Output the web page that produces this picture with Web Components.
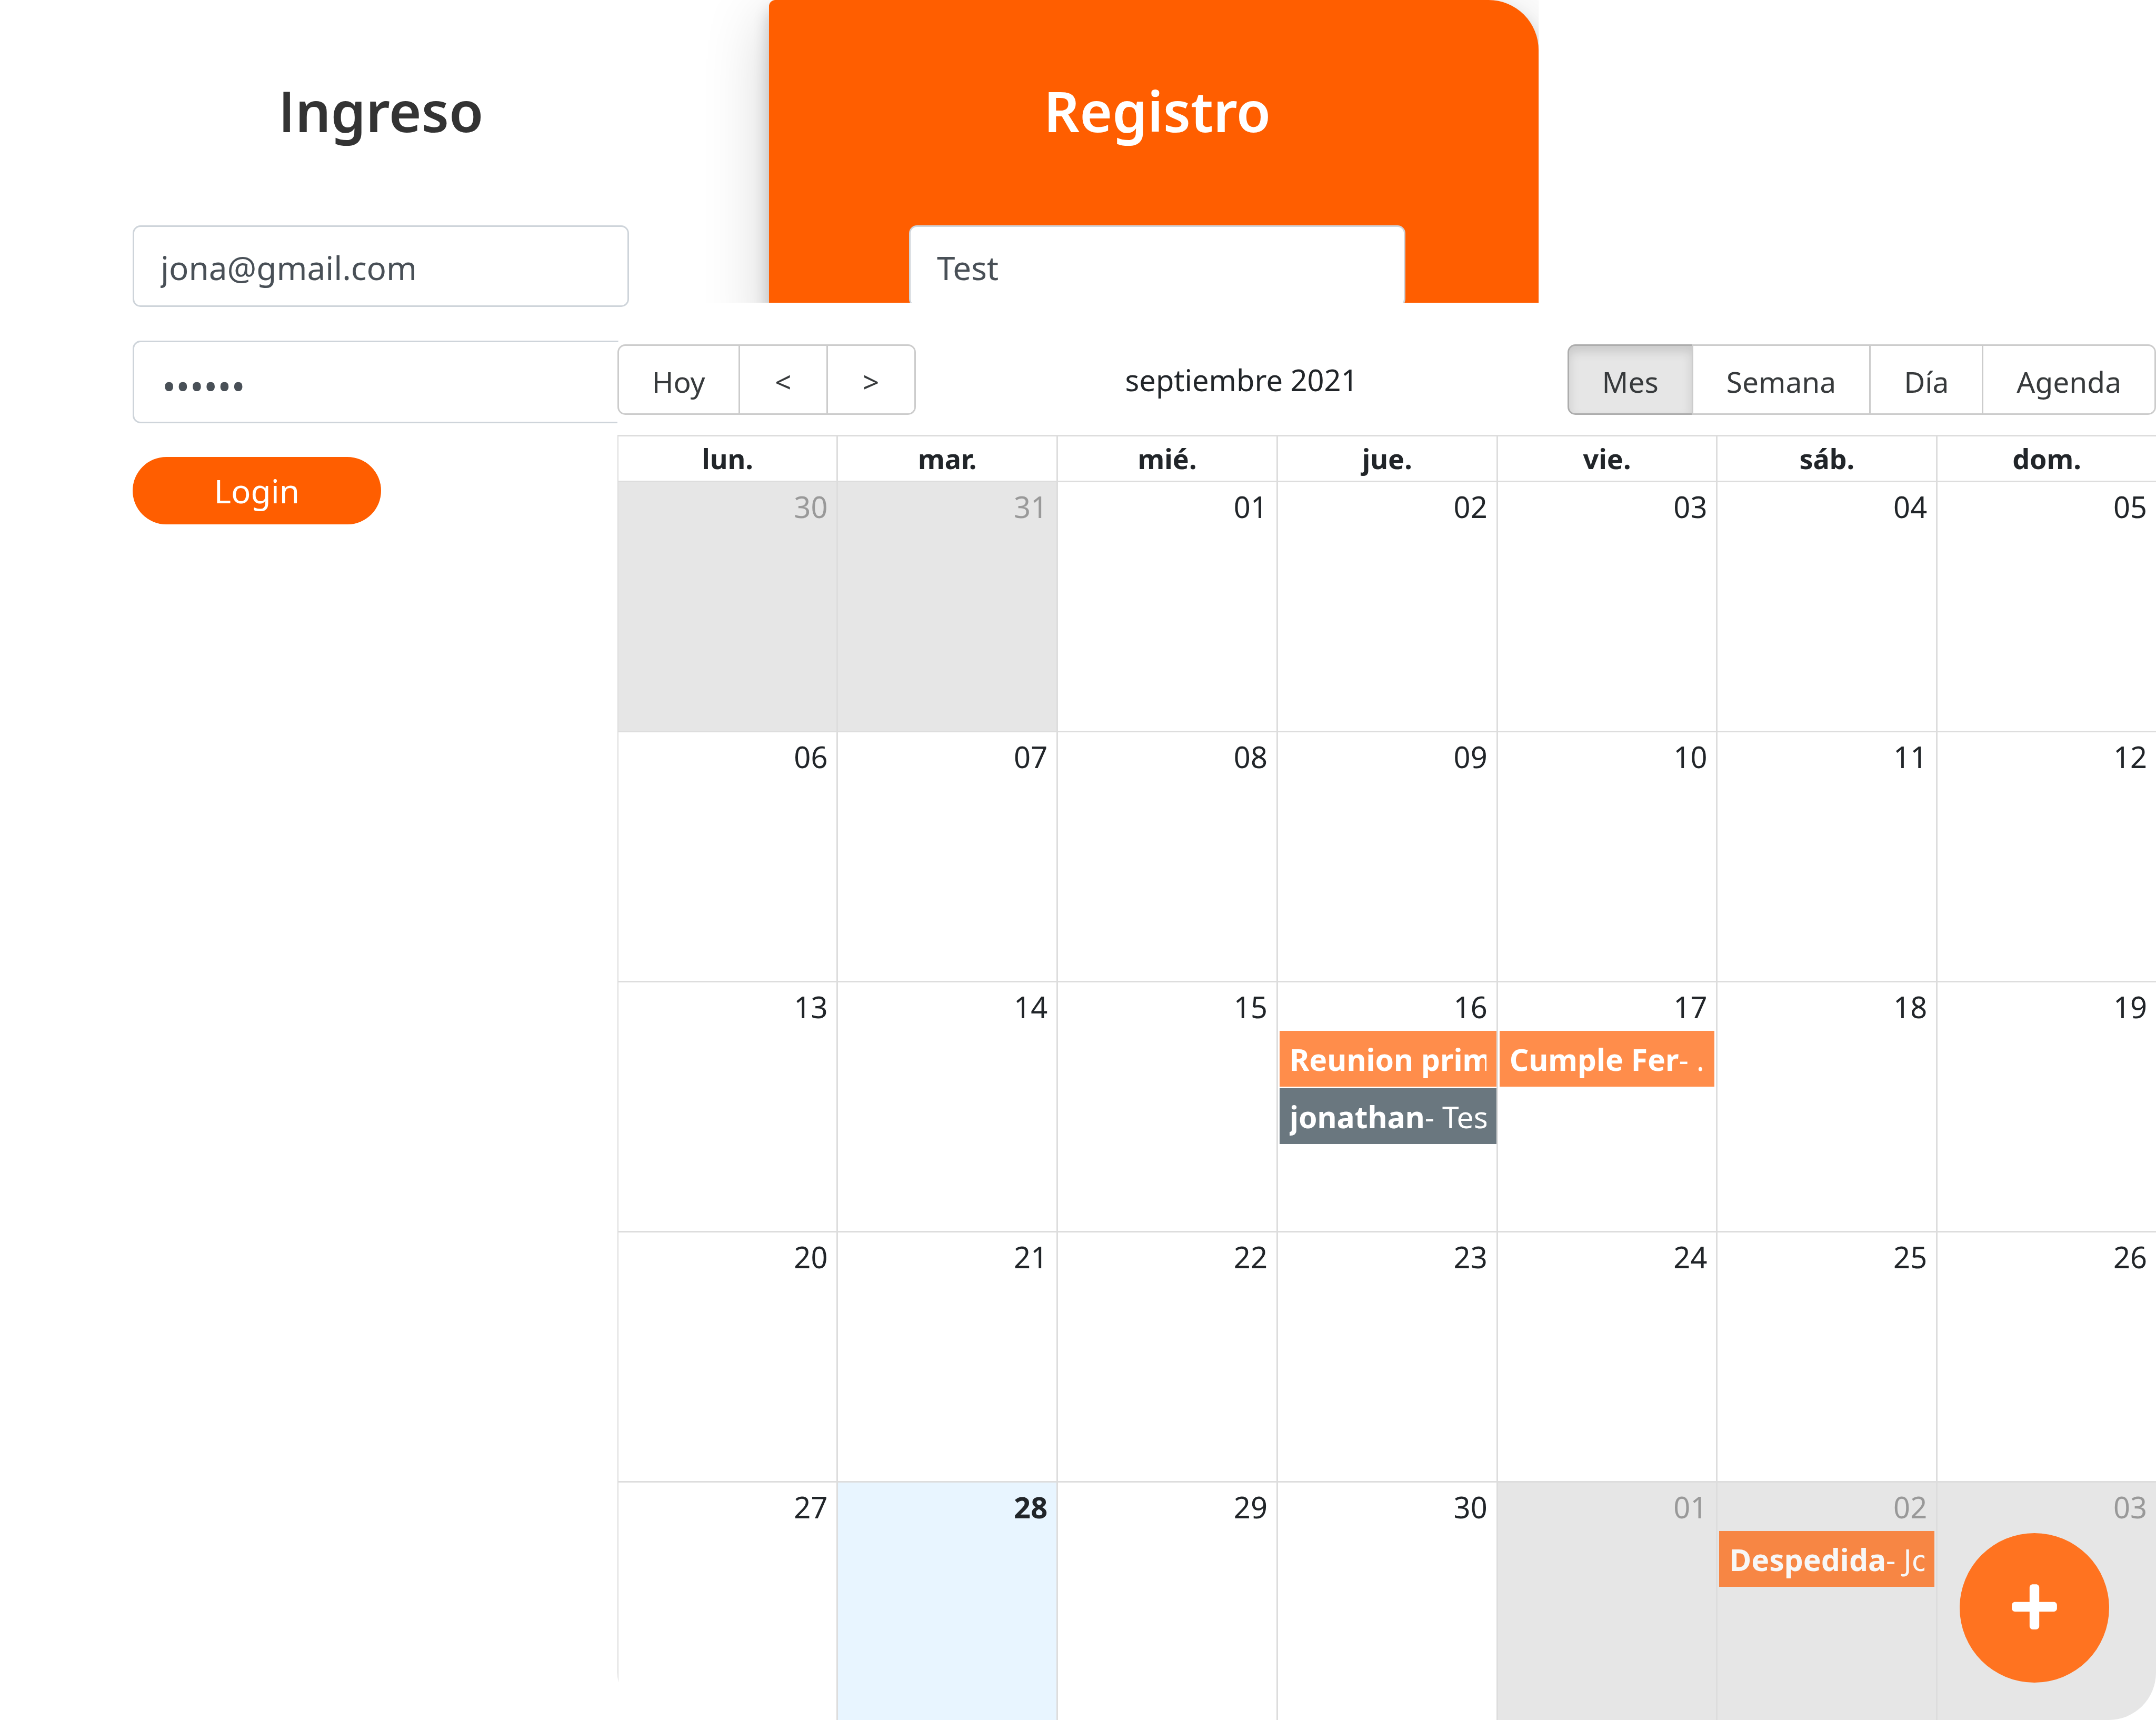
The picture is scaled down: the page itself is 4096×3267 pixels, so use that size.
<!DOCTYPE html>
<html lang="es">
<head>
<meta charset="utf-8">
<title>Calendario</title>
<style>
  html, body { margin: 0; background: #fff; }
  body {
    font-family: "Noto Sans", "Open Sans", sans-serif;
    font-size: 56px;
    color: #212529;
  }
</style>
</head>
<body>
<app-shell>
  <auth-panel heading="Ingreso">
    <text-field label="Correo" type="email" value="jona@gmail.com"></text-field>
    <text-field label="Contraseña" type="password" value="123456"></text-field>
    <pill-button>Login</pill-button>
  </auth-panel>
  <auth-panel heading="Registro" accent>
    <text-field label="Nombre" type="text" value="Test"></text-field>
  </auth-panel>
  <calendar-card slot="front">
    <calendar-toolbar slot="toolbar">septiembre 2021</calendar-toolbar>
    <month-view></month-view>
    <add-button slot="action"></add-button>
  </calendar-card>
</app-shell>

<script>
const define = (name, html, setup) => {
  const tpl = document.createElement('template');
  tpl.innerHTML = html;
  customElements.define(name, class extends HTMLElement {
    connectedCallback() {
      if (this.shadowRoot) return;
      this.attachShadow({ mode: 'open' }).append(tpl.content.cloneNode(true));
      if (setup) setup(this, this.shadowRoot);
    }
  });
};

/* Two layers in one grid cell: the sign-in panels behind, the calendar in front */
define('app-shell', `
  <style>
    :host { display: grid; grid-template: 1fr / 1fr; min-height: 100vh; overflow: hidden; }
    .back, ::slotted([slot=front]) { grid-area: 1 / 1; }
    .back { display: grid; grid-template-columns: 35.67% 35.7%; align-items: start; }
    ::slotted([slot=front]) { margin: 575px 0 0 28.63%; }
  </style>
  <main class="back"><slot></slot></main>
  <slot name="front"></slot>`);

/* The accent panel casts its shadow over the panel on its left only */
define('auth-panel', `
  <style>
    :host { display: block; box-sizing: border-box; padding: 145px 266px 60px 252px; color: #333; }
    :host([accent]) {
      padding: 145px 253px 60px 266px; background: #ff5e00; color: #fff;
      border-radius: 12px 95px 0 0;
      box-shadow: 0 19px 30px rgba(0,0,0,.2), 0 34px 124px rgba(0,0,0,.19);
      clip-path: inset(0 0 0 -200px);
    }
    h2 { margin: 0 0 153px; font-size: 106px; line-height: 130px; font-weight: 600; text-align: center; }
    :host(:not([accent])) h2::first-letter { font-family: "Open Sans"; }
    .fields { display: flex; flex-direction: column; gap: 64px; }
  </style>
  <h2></h2>
  <div class="fields"><slot></slot></div>`,
  (el, root) => { root.querySelector('h2').textContent = el.getAttribute('heading'); });

define('text-field', `
  <style>
    :host { display: block; }
    input {
      display: block; box-sizing: border-box; width: 100%; height: 155px; margin: 0;
      padding: 5px 50px 0; border: 3px solid #ced4da; border-radius: 15px; background: #fff;
      font: 62px/90px "Noto Sans", sans-serif; color: #495057; outline: 0;
    }
    input[type=password] { height: 157px; padding: 14px 53px 0; font-size: 70px; }
  </style>
  <input>`,
  (el, root) => {
    const input = root.querySelector('input');
    input.type = el.getAttribute('type');
    input.value = el.getAttribute('value');
    input.setAttribute('aria-label', el.getAttribute('label'));
  });

define('pill-button', `
  <style>
    :host { display: block; }
    button {
      display: block; width: 50%; height: 128px; margin: 0; padding: 0; border: 0; border-radius: 64px;
      background: #ff5e00; color: #fff; font: 62px/90px "Noto Sans", sans-serif;
    }
  </style>
  <button type="button"><slot></slot></button>`);

define('calendar-card', `
  <style>
    :host {
      display: flex; flex-direction: column; position: relative; box-sizing: border-box;
      padding-top: 79px; background: #fff; border-radius: 90px; overflow: hidden;
    }
    ::slotted([slot=action]) { position: absolute; right: 89px; bottom: 71px; }
  </style>
  <slot name="toolbar"></slot>
  <slot></slot>
  <slot name="action"></slot>`);

define('calendar-toolbar', `
  <style>
    :host { display: flex; align-items: center; margin-bottom: 38px; }
    .group { display: flex; }
    .label { flex: 1; text-align: center; line-height: 84px; }
    button {
      box-sizing: border-box; height: 134px; min-width: 170px; margin: 0 0 0 -3px; padding: 8px 63px 0;
      border: 3px solid #ccc; background: #fff; color: #373a3c;
      font: 55px/84px "Noto Sans", sans-serif; white-space: nowrap;
    }
    button:first-child { margin-left: 0; border-radius: 15px 0 0 15px; }
    button:last-child { border-radius: 0 15px 15px 0; }
    button.active { background: #e6e6e6; border-color: #adadad; box-shadow: inset 0 11px 19px rgba(0,0,0,.125); }
  </style>
  <div class="group">
    <button type="button">Hoy</button><button type="button">&lt;</button><button type="button">&gt;</button>
  </div>
  <div class="label"><slot></slot></div>
  <div class="group">
    <button type="button" class="active">Mes</button><button type="button">Semana</button><button type="button">Día</button><button type="button">Agenda</button>
  </div>`);

define('calendar-event', `
  <style>
    :host {
      display: block; box-sizing: border-box; height: 106px; margin: 0 3px 3px; padding: 12px 19px 0;
      background: #ff5e00; color: #fff; opacity: .7; font-size: 57px;
    }
    :host([tone=gray]) { background: #465660; opacity: .8; }
    :host([wide]) { margin-right: 0; }
    div { overflow: hidden; white-space: nowrap; line-height: 84px; }
  </style>
  <div><strong></strong><span></span></div>`,
  (el, root) => {
    root.querySelector('strong').textContent = el.getAttribute('name');
    root.querySelector('span').textContent = el.getAttribute('note');
  });

define('calendar-day', `
  <style>
    :host { display: block; }
    .date { padding-right: 17px; line-height: 92px; text-align: right; }
    :host([today]) .date { font-weight: 700; }
    :host([off]) .date { color: #999; }
  </style>
  <div class="date"></div>
  <slot></slot>`,
  (el, root) => { root.querySelector('.date').textContent = el.getAttribute('date'); });

/* Runs 3px past the card, so that the last column's rule is clipped by it */
define('month-view', `
  <style>
    :host { display: block; margin-right: -3px; }
    table {
      width: 100%; table-layout: fixed; border-collapse: separate; border-spacing: 0;
      border: 0 solid #ddd; border-width: 3px 0 0 2px;
    }
    th, td { box-sizing: border-box; padding: 0; border: 0 solid #ddd; border-right-width: 3px; }
    th { height: 87px; border-bottom-width: 3px; font-size: 52px; line-height: 84px; text-align: center; }
    td { height: 475px; border-top-width: 3px; vertical-align: top; }
    tr:first-child td { height: 472px; border-top-width: 0; }
    tr:last-child td { height: 454px; }
    td.off { background: #e6e6e6; }
    td.today { background: #e8f5ff; }
  </style>
  <table><thead><tr></tr></thead><tbody></tbody></table>`,
  (el, root) => {
    const events = {
      '2-3': [['Reunion prim', '', 'wide'], ['jonathan', '- Tes', 'wide tone="gray"']],
      '2-4': [['Cumple Fer', '- .', '']],
      '4-5': [['Despedida', '- Jo', '']]
    };
    root.querySelector('thead tr').innerHTML =
      ['lun.', 'mar.', 'mié.', 'jue.', 'vie.', 'sáb.', 'dom.'].map(d => `<th scope="col">${d}</th>`).join('');
    let body = '';
    for (let w = 0; w < 5; w++) {
      body += '<tr>';
      for (let d = 0; d < 7; d++) {
        const n = w * 7 + d - 1;
        const off = n < 1 || n > 30;
        const num = n < 1 ? n + 31 : n > 30 ? n - 30 : n;
        const state = off ? 'off' : n === 28 ? 'today' : '';
        const items = (events[w + '-' + d] || [])
          .map(([name, note, extra]) => `<calendar-event name="${name}" note="${note}" ${extra}></calendar-event>`).join('');
        body += `<td class="${state}"><calendar-day date="${String(num).padStart(2, '0')}" ${state}>${items}</calendar-day></td>`;
      }
      body += '</tr>';
    }
    root.querySelector('tbody').innerHTML = body;
  });

define('add-button', `
  <style>
    :host { display: block; }
    button {
      display: flex; align-items: center; justify-content: center; box-sizing: border-box;
      width: 284px; height: 284px; margin: 0; padding: 0 0 4px; border: 0; border-radius: 50%;
      background: #ff7320;
    }
    svg { display: block; width: 86px; height: 98px; fill: #fff; }
  </style>
  <button type="button" aria-label="Agregar evento">
    <svg viewBox="0 0 448 512" aria-hidden="true"><path d="M416 208H272V64c0-17.67-14.33-32-32-32h-32c-17.67 0-32 14.33-32 32v144H32c-17.67 0-32 14.33-32 32v32c0 17.67 14.33 32 32 32h144v144c0 17.67 14.33 32 32 32h32c17.67 0 32-14.33 32-32V304h144c17.67 0 32-14.33 32-32v-32c0-17.67-14.33-32-32-32z"/></svg>
  </button>`);
</script>
</body>
</html>
